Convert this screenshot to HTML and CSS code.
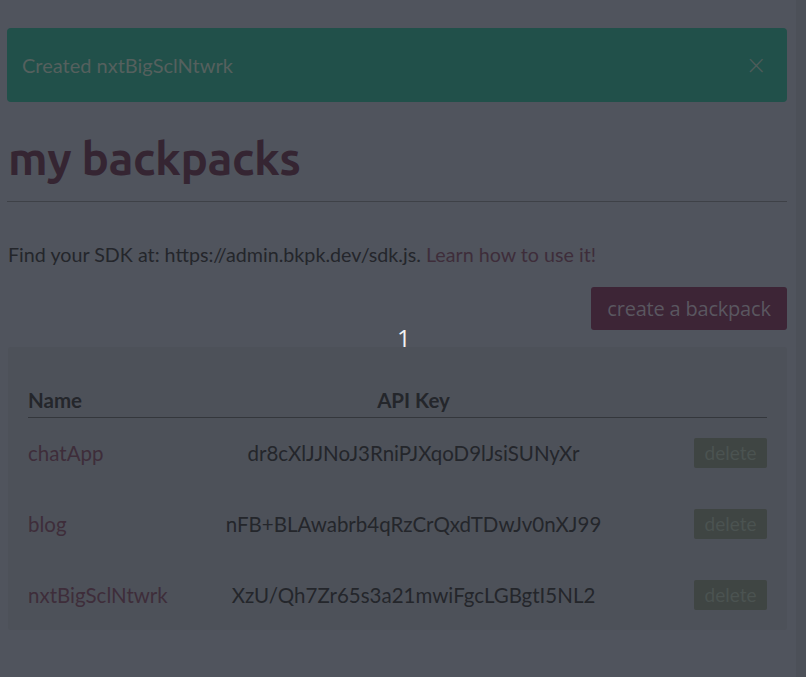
FILE: index.html
```html
<!DOCTYPE html>
<html lang="en">
<head>
    <meta charset="UTF-8">
    <meta name="viewport" content="width=device-width, initial-scale=1.0">
    <title>my backpacks</title>
    <link rel="stylesheet" href="styles.css">
</head>
<body>
    <div class="page">
        <div class="alert">
            <span class="alert-text">Created nxtBigSclNtwrk</span>
            <span class="alert-close">&times;</span>
        </div>

        <h1 class="title">my backpacks</h1>
        <hr class="rule">

        <p class="sdk">Find your SDK at: https://admin.bkpk.dev/sdk.js. <a class="link" href="#">Learn how to use it!</a></p>

        <div class="actions">
            <button class="btn-create">create a backpack</button>
        </div>

        <div class="card">
            <table class="packs">
                <thead>
                    <tr>
                        <th class="col-name">Name</th>
                        <th class="col-key">API Key</th>
                        <th class="col-act"></th>
                    </tr>
                </thead>
                <tbody>
                    <tr>
                        <td class="col-name"><a class="link" href="#">chatApp</a></td>
                        <td class="col-key">dr8cXlJJNoJ3RniPJXqoD9lJsiSUNyXr</td>
                        <td class="col-act"><button class="btn-delete">delete</button></td>
                    </tr>
                    <tr>
                        <td class="col-name"><a class="link" href="#">blog</a></td>
                        <td class="col-key">nFB+BLAwabrb4qRzCrQxdTDwJv0nXJ99</td>
                        <td class="col-act"><button class="btn-delete">delete</button></td>
                    </tr>
                    <tr>
                        <td class="col-name"><a class="link" href="#">nxtBigSclNtwrk</a></td>
                        <td class="col-key">XzU/Qh7Zr65s3a21mwiFgcLGBgtI5NL2</td>
                        <td class="col-act"><button class="btn-delete">delete</button></td>
                    </tr>
                </tbody>
            </table>
        </div>
    </div>

    <!-- modal backdrop content -->
    <div class="modal-count">1</div>
    <div class="scrollbar"></div>
</body>
</html>
```

FILE: styles.css
```css
* {
    margin: 0;
    padding: 0;
    box-sizing: border-box;
}
html, body {
    height: 100%;
}
body {
    background: #50545d;
    font-family: Lato, "Liberation Sans", sans-serif;
    color: #24262b;
    overflow: hidden;
}
.page {
    width: 780px;
    margin-left: 7px;
    padding-top: 28px;
}
.alert {
    display: flex;
    align-items: center;
    justify-content: space-between;
    height: 74px;
    padding: 0 20px 0 15px;
    background: #21504a;
    border-radius: 4px;
    color: #55605e;
    font-size: 20px;
}
.alert-close {
    font-family: "DejaVu Sans", sans-serif;
    font-weight: 200;
    font-size: 26px;
    color: #4e5c5a;
    line-height: 1;
}
.title {
    margin-top: 29px;
    padding-left: 1px;
    font-family: Ubuntu, "Open Sans", sans-serif;
    font-weight: 700;
    font-size: 46px;
    letter-spacing: -0.5px;
    line-height: 54px;
    color: #352532;
}
.rule {
    margin-top: 16px;
    border: 0;
    border-top: 1px solid #3e4147;
}
.sdk {
    margin-top: 41px;
    padding-left: 1px;
    font-size: 19.7px;
    line-height: 24px;
}
.link {
    color: #3e2d3a;
    text-decoration: none;
}
.actions {
    display: flex;
    justify-content: flex-end;
    margin-top: 20px;
}
.btn-create {
    width: 196px;
    height: 43px;
    border: 0;
    border-radius: 3px;
    background: #3d2536;
    color: #5a5760;
    font-family: "Open Sans", sans-serif;
    font-size: 20px;
    letter-spacing: -0.2px;
}
.card {
    margin-top: 17px;
    margin-left: 1px;
    padding: 36px 20px 0;
    background: #4d5159;
    border-radius: 3px;
}
.packs {
    width: 100%;
    border-collapse: collapse;
    font-size: 20.5px;
}
.packs th {
    height: 34px;
    border-bottom: 1px solid #34373c;
    font-weight: 700;
    text-align: left;
    vertical-align: middle;
}
.packs td {
    height: 71px;
    vertical-align: middle;
}
.col-name {
    width: 170px;
}
.packs .col-key {
    text-align: center;
    padding-right: 38px;
}
.col-act {
    width: 100px;
    text-align: right;
}
.btn-delete {
    width: 73px;
    height: 30px;
    border: 0;
    border-radius: 2px;
    background: #3f4543;
    color: #4b5351;
    font-family: Lato, sans-serif;
    font-size: 19px;
}
.modal-count {
    position: absolute;
    left: 397px;
    top: 321px;
    color: #f2f2f2;
    font-family: "Open Sans", sans-serif;
    font-size: 24px;
}
.scrollbar {
    position: absolute;
    top: 0;
    right: 0;
    width: 10px;
    height: 100%;
    background: #4c5058;
}
```
